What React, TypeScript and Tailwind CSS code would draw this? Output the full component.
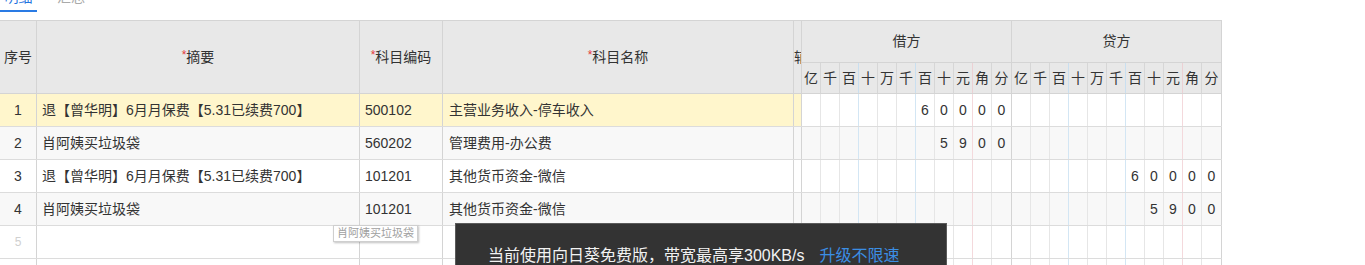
import React from 'react';

type Row = {
  no: number;
  summary: string;
  code: string;
  name: string;
  debit: string;
  credit: string;
};

const ROWS: Row[] = [
  { no: 1, summary: '退【曾华明】6月月保费【5.31已续费700】', code: '500102', name: '主营业务收入-停车收入', debit: '60000', credit: '' },
  { no: 2, summary: '肖阿姨买垃圾袋', code: '560202', name: '管理费用-办公费', debit: '5900', credit: '' },
  { no: 3, summary: '退【曾华明】6月月保费【5.31已续费700】', code: '101201', name: '其他货币资金-微信', debit: '', credit: '60000' },
  { no: 4, summary: '肖阿姨买垃圾袋', code: '101201', name: '其他货币资金-微信', debit: '', credit: '5900' },
];

const UNITS = ['亿', '千', '百', '十', '万', '千', '百', '十', '元', '角', '分'];

// line after 百 / 千 is blue, after 元 is red, the rest grey
const lineClass = (i: number) => {
  if (i === 10) return '';
  if (i === 2 || i === 5) return 'border-r border-[#d3e6f4]';
  if (i === 8) return 'border-r border-[#f4d9dc]';
  return 'border-r border-[#e6e6e6]';
};

const headLineClass = (i: number) => {
  if (i === 10) return '';
  if (i === 2 || i === 5) return 'border-r border-[#c9dff0]';
  if (i === 8) return 'border-r border-[#ecd0d3]';
  return 'border-r border-[#d6d6d6]';
};

const Digits: React.FC<{ value: string }> = ({ value }) => {
  const slots = value.padStart(11, ' ').split('');
  return (
    <div className="grid grid-cols-11 h-full w-[210px] shrink-0 border-r border-[#d4d4d4]">
      {slots.map((d, i) => (
        <div key={i} className={`flex items-center justify-center h-full ${lineClass(i)}`}>
          {d.trim()}
        </div>
      ))}
    </div>
  );
};

const Req: React.FC = () => <span className="text-[#e4393c] text-[12px] relative -top-[2px]">*</span>;

const App: React.FC = () => {
  return (
    <div
      className="relative w-[1365px] h-[265px] overflow-hidden bg-white text-[14px] text-[#333]"
      style={{ fontFamily: '"Liberation Sans", "Noto Sans CJK SC", sans-serif' }}
    >
      {/* Tabs */}
      <div className="h-[20px] flex items-start overflow-hidden">
        <div className="relative w-[37px] h-[12px] flex justify-center">
          <span className="text-[#1f74e0] leading-[20px] -mt-[13px]">明细</span>
          <div className="absolute left-0 right-0 top-[10px] h-[2px] bg-[#2a7be4]" />
        </div>
        <div className="ml-[20px] h-[12px] overflow-hidden">
          <span className="block text-[#aaa] leading-[20px] -mt-[13px]">汇总</span>
        </div>
      </div>

      {/* Table */}
      <div className="w-[1222px] border-t border-[#d4d4d4]">
        {/* Header */}
        <div className="flex h-[73px] bg-[#e8e8e8]">
          <div className="w-[37px] shrink-0 flex items-center justify-center border-r border-b border-[#d4d4d4]">序号</div>
          <div className="w-[323px] shrink-0 flex items-center justify-center border-r border-b border-[#d4d4d4]"><Req />摘要</div>
          <div className="w-[83px] shrink-0 flex items-center justify-center border-r border-b border-[#d4d4d4]"><Req />科目编码</div>
          <div className="w-[351px] shrink-0 flex items-center justify-center border-r border-b border-[#d4d4d4]"><Req />科目名称</div>
          <div className="w-[8px] shrink-0 flex items-center overflow-hidden whitespace-nowrap border-r border-b border-[#d4d4d4]">辅助核算</div>
          {['借方', '贷方'].map((t) => (
            <div key={t} className="w-[210px] shrink-0 flex flex-col border-r border-[#d4d4d4]">
              <div className="h-[42px] flex items-center justify-center border-b border-[#d4d4d4]">{t}</div>
              <div className="h-[31px] grid grid-cols-11 border-b border-[#d4d4d4]">
                {UNITS.map((u, i) => (
                  <div key={i} className={`flex items-center justify-center ${headLineClass(i)}`}>{u}</div>
                ))}
              </div>
            </div>
          ))}
        </div>

        {/* Body */}
        {ROWS.map((r) => {
          const bg = r.no === 1 ? 'bg-[#fff6cc]' : r.no % 2 === 0 ? 'bg-[#f8f8f8]' : 'bg-white';
          return (
            <div key={r.no} className={`flex h-[33px] border-b border-[#dcdcdc] ${r.no % 2 === 0 ? 'bg-[#f8f8f8]' : 'bg-white'}`}>
              <div className={`w-[37px] shrink-0 flex items-center justify-center border-r border-[#d4d4d4] ${bg}`}>{r.no}</div>
              <div className={`w-[323px] shrink-0 flex items-center pl-[5px] whitespace-nowrap border-r border-[#d4d4d4] ${bg}`}>{r.summary}</div>
              <div className={`w-[83px] shrink-0 flex items-center pl-[5px] border-r border-[#d4d4d4] ${bg}`}>{r.code}</div>
              <div className={`w-[351px] shrink-0 flex items-center pl-[6px] border-r border-[#d4d4d4] ${bg}`}>{r.name}</div>
              <div className={`w-[8px] shrink-0 border-r border-[#d4d4d4] ${bg}`} />
              <Digits value={r.debit} />
              <Digits value={r.credit} />
            </div>
          );
        })}
        {[5, 6].map((n) => (
          <div key={n} className="flex h-[33px] border-b border-[#dcdcdc] bg-white">
            <div className="w-[37px] shrink-0 flex items-center justify-center border-r border-[#d4d4d4] text-[12px] text-[#d0d0d0]">{n}</div>
            <div className="w-[323px] shrink-0 border-r border-[#d4d4d4]" />
            <div className="w-[83px] shrink-0 border-r border-[#d4d4d4]" />
            <div className="w-[351px] shrink-0 border-r border-[#d4d4d4]" />
            <div className="w-[8px] shrink-0 border-r border-[#d4d4d4]" />
            <Digits value="" />
            <Digits value="" />
          </div>
        ))}
      </div>

      {/* Hover tooltip */}
      <div className="absolute left-[333px] top-[225px] h-[17px] px-[3px] flex items-center bg-white border border-[#cfcfcf] shadow-[1px_1px_2px_rgba(0,0,0,0.25)] text-[11px] text-[#a0a0a0] leading-none">
        肖阿姨买垃圾袋
      </div>

      {/* Remote-desktop toast */}
      <div className="absolute left-[455px] top-[223px] w-[492px] h-[60px] bg-[#333333] border border-[#5a5a5a] pl-[32px] pt-[20px] text-[16px] leading-[24px] text-[#f2f2f2] whitespace-nowrap">
        当前使用向日葵免费版，带宽最高享300KB/s
        <span className="ml-[15px] text-[#3b8ee4]">升级不限速</span>
      </div>
    </div>
  );
};

export default App;
